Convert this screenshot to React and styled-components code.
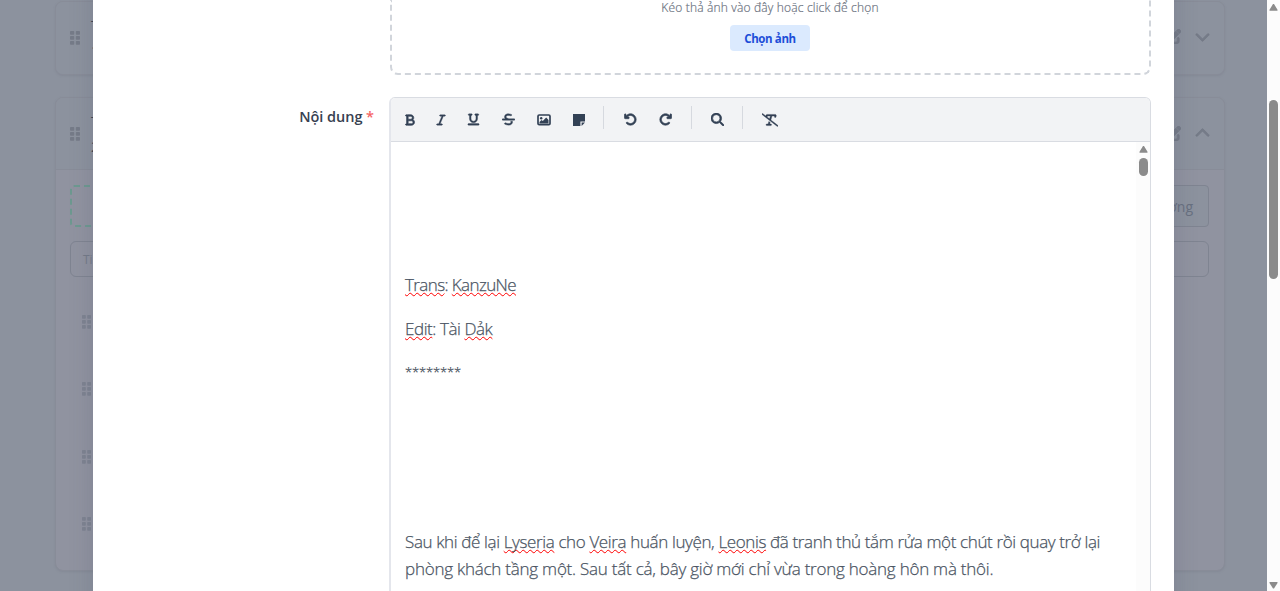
import React from "react"
import styled, { createGlobalStyle, css } from "styled-components"
import {
  FaArrowRotateLeft,
  FaArrowRotateRight,
  FaBold,
  FaChevronDown,
  FaChevronUp,
  FaItalic,
  FaMagnifyingGlass,
  FaPenToSquare,
  FaStrikethrough,
  FaTextSlash,
  FaUnderline,
} from "react-icons/fa6"

const colors = {
  page: "#8c929e",
  card: "#9093a0",
  cardLine: "#888c98",
  muted: "#757b88",
  border: "#d9dce2",
  toolbar: "#f2f3f5",
  icon: "#334155",
  text: "#4b5563",
  scroll: "#8b8b8b",
}

const GlobalStyle = createGlobalStyle`
  * {
    box-sizing: border-box;
  }
  body {
    margin: 0;
    overflow: hidden;
    font-family: "Open Sans", "Noto Sans", sans-serif;
  }
  p {
    margin: 0;
  }
`

const Screen = styled.div`
  position: relative;
  display: flex;
  height: 591px;
  width: 1280px;
  overflow: hidden;
  background: ${colors.page};
`

const Page = styled.main`
  flex: 1;
  height: 591px;
  padding: 1px 42px 0 55px;
  overflow: hidden;
`

const Card = styled.section`
  height: ${props => props.height}px;
  margin-bottom: 22px;
  border: 1px solid ${colors.cardLine};
  border-radius: 8px;
  overflow: hidden;
  background: ${props => (props.open ? colors.card : colors.page)};
  box-shadow: 0 1px 2px rgba(110, 115, 130, 0.25);
`

const CardHeader = styled.header`
  display: flex;
  align-items: center;
  height: 72px;
  padding: 0 14px;
  background: ${colors.page};
  color: ${colors.muted};
  border-bottom: ${props =>
    props.open ? `1px solid ${colors.cardLine}` : "none"};
`

const CardTitle = styled.div`
  flex: 1;
  margin-left: 11px;
  color: #3b4452;
  font-size: 15px;
  line-height: 25px;
`

const HeaderActions = styled.div`
  display: flex;
  align-items: center;
  gap: 14px;
  margin-top: ${props => (props.open ? 0 : -3)}px;

  path {
    stroke: currentColor;
    stroke-width: 30px;
  }
`

const CardBody = styled.div`
  padding: 15px 15px 0 14px;
`

const ButtonRow = styled.div`
  display: flex;
  gap: 16px;
  height: 42px;
`

const AddButton = styled.div`
  flex: 1;
  border: 2px dashed #6d9990;
  border-radius: 4px;
`

const GhostButton = styled.div`
  display: flex;
  align-items: center;
  justify-content: flex-end;
  width: 160px;
  padding-right: 15px;
  border: 1px solid #7f8491;
  border-radius: 4px;
  background: ${colors.page};
  color: #687080;
  font-size: 14px;
`

const TitleField = styled.div`
  height: 36px;
  margin-top: 14px;
  padding-left: 12px;
  border: 1px solid #7f8491;
  border-radius: 6px;
  color: #747a88;
  font-size: 12px;
  line-height: 35px;
`

const Rows = styled.div`
  padding: 11px 0 0 12px;
`

const Row = styled.div`
  display: flex;
  align-items: center;
  height: 67.5px;
  color: #7e8391;
`

const Modal = styled.div`
  position: absolute;
  top: 0;
  left: 93px;
  width: 1081px;
  height: 591px;
  padding: 0 23px 0 0;
  overflow: hidden;
  background: #fff;
`

const ModalShadow = styled.div`
  position: absolute;
  top: -60px;
  left: 93px;
  width: 1081px;
  height: 711px;
  box-shadow: 0 0 22px rgba(70, 75, 95, 0.22);
`

const FormRow = styled.div`
  display: grid;
  grid-template-columns: 281px 762px;
  column-gap: 15px;
`

const Label = styled.label`
  padding-top: 10px;
  text-align: right;
  color: #374151;
  font-size: 14.5px;
  font-weight: 600;
  line-height: 20px;
  letter-spacing: -0.05px;

  span {
    color: #f56565;
  }
`

const DropZone = styled.div`
  grid-column: 2;
  display: flex;
  flex-direction: column;
  align-items: center;
  height: 75px;
  margin: 0 0 22px 1px;
  padding-right: 1px;
  border: 2px dashed #d1d5db;
  border-top: 0;
  border-radius: 0 0 8px 8px;
`

const Hint = styled.p`
  color: #6b7280;
  font-size: 12px;
  font-weight: 300;
  line-height: 16px;
  letter-spacing: 0.17px;
  -webkit-text-stroke: 0.2px currentColor;
`

const PickButton = styled.button`
  width: 80px;
  height: 26px;
  margin-top: 9px;
  padding: 0;
  border: 0;
  border-radius: 4px;
  background: #dbeafe;
  color: #1d4ed8;
  font: 700 11.5px/27px "Open Sans", "Noto Sans", sans-serif;
  letter-spacing: -0.4px;
`

const Editor = styled.div`
  height: 520px;
  border: 1px solid ${colors.border};
  border-left: 2px solid #e4e6ec;
  border-radius: 6px 6px 0 0;
  overflow: hidden;
`

const Toolbar = styled.div`
  display: flex;
  align-items: flex-start;
  height: 44px;
  padding: 8px 0 0 1px;
  border-bottom: 1px solid ${colors.border};
  background: ${colors.toolbar};
`

const Tool = styled.span`
  display: flex;
  align-items: center;
  justify-content: center;
  width: ${props => props.width || 35}px;
  height: 27px;
  color: ${colors.icon};

  path {
    stroke: currentColor;
    stroke-width: ${props => props.weight || 14}px;
  }
`

const Divider = styled.span`
  width: 1px;
  height: 23px;
  margin: 0 8px;
  background: #d6d9df;
`

const EditorBody = styled.div`
  display: flex;
  height: 476px;
`

const Content = styled.div`
  flex: 1;
  padding: 129px 0 0 14px;
  color: ${colors.text};
  font-size: 17px;
  font-weight: 300;
  line-height: 27px;
  white-space: nowrap;
  -webkit-text-stroke: 0.25px currentColor;
`

const Line = styled.p`
  height: 27px;
  margin-top: ${props => props.gap || 0}px;
  letter-spacing: ${props => props.spacing || "-0.37px"};
`

const Stars = styled(Line)`
  font-size: 13px;
`

const Misspelled = styled.span`
  text-decoration: underline wavy #ff0000 1.4px;
  text-decoration-skip-ink: none;
  text-underline-offset: 1px;
`

const bar = css`
  display: flex;
  flex-direction: column;
  align-items: center;
  background: #fcfcfc;
`

const InnerScroll = styled.div`
  ${bar}
  width: 14px;
  padding-top: 4px;
`

const PageScroll = styled.aside`
  ${bar}
  justify-content: space-between;
  width: 13px;
  height: 591px;
  padding: 4px 0 2px;
`

const Thumb = styled.div`
  width: 9px;
  height: ${props => props.height}px;
  margin-top: ${props => props.offset || 0}px;
  border-radius: 5px;
  background: ${colors.scroll};
`

const Arrow = ({ down }) => (
  <svg width="9" height="7" viewBox="0 0 9 7">
    <path
      d={down ? "M1 0h7q1 0 .5 1L5 6.5H4L.5 1Q0 0 1 0" : "M4 0h1l3.5 5.7q.5 1.1-.5 1.1H1Q0 6.8.5 5.7Z"}
      fill={colors.scroll}
    />
  </svg>
)

const Grip = ({ width = 10 }) => (
  <svg width={width} height="14" viewBox="0 0 10 14" preserveAspectRatio="none">
    {[0, 5, 10].map(y => (
      <g key={y} fill="currentColor">
        <rect x="0" y={y} width="4.2" height="3.8" rx="0.8" />
        <rect x="5.8" y={y} width="4.2" height="3.8" rx="0.8" />
      </g>
    ))}
  </svg>
)

const ImageIcon = () => (
  <svg width="14" height="12" viewBox="0 0 14 12" fill="none">
    <rect x="1" y="1" width="12" height="9.6" rx="1.2" stroke="currentColor" strokeWidth="1.7" />
    <circle cx="4.2" cy="4.2" r="1.2" fill="currentColor" />
    <polygon points="2.5,9.4 2.5,8 4.5,6 5.8,7.1 9.2,3.6 11.5,6 11.5,9.4" fill="currentColor" />
  </svg>
)

const NoteIcon = () => (
  <svg width="12" height="12" viewBox="0 0 12 12" fill="currentColor">
    <polygon points="0,0 12,0 12,7.4 7.4,7.4 7.4,12 0,12" />
    <polygon points="8.6,8.6 12,8.6 8.6,12" />
  </svg>
)

const Header = ({ open }) => (
  <CardHeader open={open}>
    <Grip />
    <CardTitle>
      <p>Tập</p>
      <p>{open ? "2 chương" : "1 chương"}</p>
    </CardTitle>
    <HeaderActions open={open}>
      <FaPenToSquare size={15} />
      {open ? <FaChevronUp size={15} /> : <FaChevronDown size={15} />}
    </HeaderActions>
  </CardHeader>
)

const App = () => {
  return (
    <>
      <GlobalStyle />
      <Screen>
        <Page>
          <Card height={74}>
            <Header />
          </Card>
          <Card height={474} open>
            <Header open />
            <CardBody>
              <ButtonRow>
                <AddButton />
                <GhostButton>chương</GhostButton>
              </ButtonRow>
              <TitleField>Tiêu đề</TitleField>
              <Rows>
                {[1, 2, 3, 4].map(row => (
                  <Row key={row}>
                    <Grip width={9} />
                  </Row>
                ))}
              </Rows>
            </CardBody>
          </Card>
        </Page>
        <ModalShadow />
        <Modal>
          <FormRow>
            <DropZone>
              <Hint>Kéo thả ảnh vào đây hoặc click để chọn</Hint>
              <PickButton>Chọn ảnh</PickButton>
            </DropZone>
          </FormRow>
          <FormRow>
            <Label>
              Nội dung <span>*</span>
            </Label>
            <Editor>
              <Toolbar>
                <Tool weight={30}><FaBold size={12} /></Tool>
                <Tool width={28}><FaItalic size={12} /></Tool>
                <Tool width={37}><FaUnderline size={13} /></Tool>
                <Tool width={33}><FaStrikethrough size={13} /></Tool>
                <Tool width={37}><ImageIcon /></Tool>
                <Tool width={33}><NoteIcon /></Tool>
                <Divider />
                <Tool width={36} weight={26}><FaArrowRotateLeft size={13} /></Tool>
                <Tool width={35} weight={26}><FaArrowRotateRight size={13} /></Tool>
                <Divider />
                <Tool width={34} weight={26}><FaMagnifyingGlass size={13} /></Tool>
                <Divider />
                <Tool width={38} weight={14}><FaTextSlash size={16} /></Tool>
              </Toolbar>
              <EditorBody>
                <Content>
                  <Line spacing="-0.6px">
                    <Misspelled>Trans</Misspelled>: <Misspelled>KanzuNe</Misspelled>
                  </Line>
                  <Line gap={17} spacing="-0.43px">
                    <Misspelled>Edit</Misspelled>: Tài <Misspelled>Dảk</Misspelled>
                  </Line>
                  <Stars gap={17} spacing="-0.15px">********</Stars>
                  <Line gap={142}>
                    Sau khi để lại <Misspelled>Lyseria</Misspelled> cho{" "}
                    <Misspelled>Veira</Misspelled> huấn luyện,{" "}
                    <Misspelled>Leonis</Misspelled> đã tranh thủ tắm rửa một
                    chút rồi quay trở lại
                  </Line>
                  <Line spacing="-0.24px">
                    phòng khách tầng một. Sau tất cả, bây giờ mới chỉ vừa trong
                    hoàng hôn mà thôi.
                  </Line>
                </Content>
                <InnerScroll>
                  <Arrow />
                  <Thumb height={18} offset={5} />
                </InnerScroll>
              </EditorBody>
            </Editor>
          </FormRow>
        </Modal>
        <PageScroll>
          <Arrow />
          <Thumb height={179} offset={-214} />
          <Arrow down />
        </PageScroll>
      </Screen>
    </>
  )
}

export default App
